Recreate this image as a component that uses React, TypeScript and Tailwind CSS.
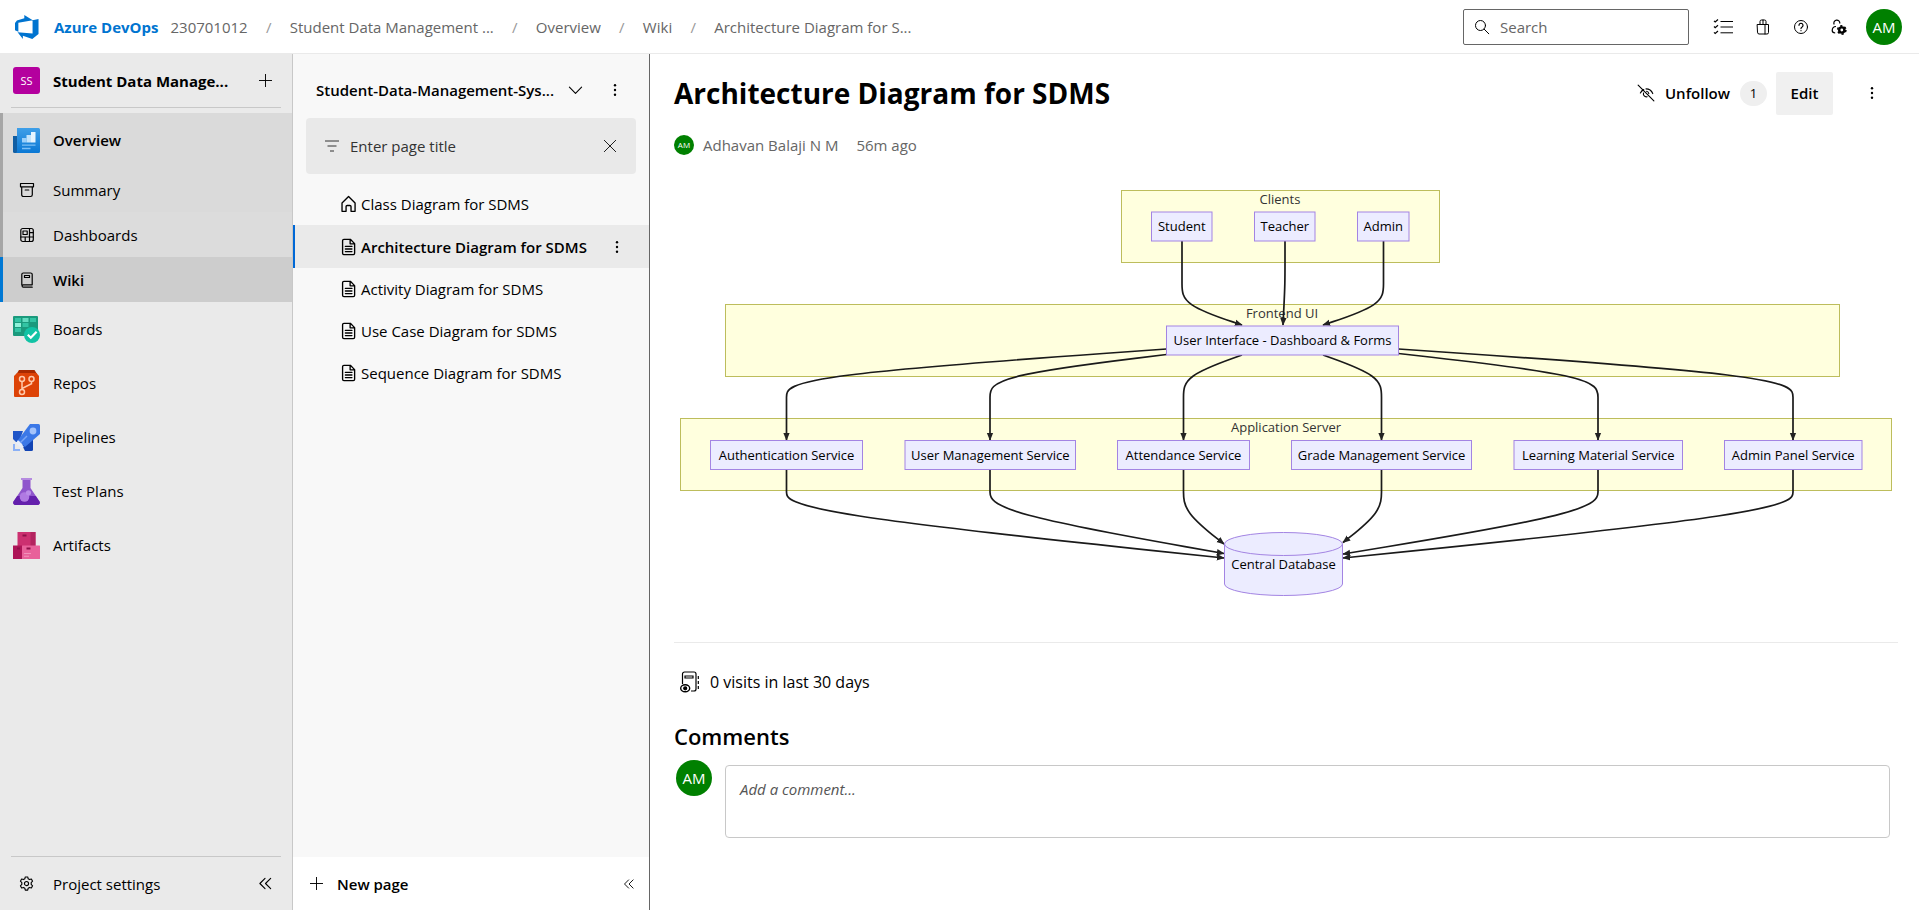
import type { ReactNode } from "react";

type Point = [number, number];

/* ---------- small line icons ---------- */

function Line({ children, className = "size-4", width = 1 }: { children: ReactNode; className?: string; width?: number }) {
  return (
    <svg viewBox="0 0 16 16" className={`shrink-0 ${className}`} fill="none" stroke="currentColor" strokeWidth={width} strokeLinecap="round" strokeLinejoin="round" aria-hidden="true">
      {children}
    </svg>
  );
}

const Plus = ({ className }: { className?: string }) => (
  <Line className={className}>
    <path d="M8 1.5v13M1.5 8h13" />
  </Line>
);

const Dots = () => (
  <svg viewBox="0 0 4 16" className="h-4 w-1 shrink-0" fill="currentColor" aria-hidden="true">
    <circle cx="2" cy="3.2" r="1.2" />
    <circle cx="2" cy="8" r="1.2" />
    <circle cx="2" cy="12.8" r="1.2" />
  </svg>
);

const DoubleChevron = ({ className }: { className?: string }) => (
  <Line className={className} width={1.2}>
    <path d="M7.5 2.5 2 8l5.5 5.5M13.5 2.5 8 8l5.5 5.5" />
  </Line>
);

const PageIcon = () => (
  <Line className="size-[18px]" width={1.2}>
    <path d="M3.5 1.2h5.700l3.800 3.800v8.600a1.200 1.200 0 0 1-1.200 1.200H3.500a1.200 1.200 0 0 1-1.200-1.200V2.400a1.200 1.200 0 0 1 1.200-1.200zM9 1.400v3.800h3.800M4.800 7.500h5.800M4.800 9.800h5.800M4.800 12.100h5.800" />
  </Line>
);

const HomeIcon = () => (
  <Line className="size-[18px]" width={1.2}>
    <path d="M1.800 7.200 7.600 1.400l5.800 5.800v7.300h-3.600v-4.200a1 1 0 0 0-1-1H6.400a1 1 0 0 0-1 1v4.200H1.800z" />
  </Line>
);

/* ---------- coloured service icons ---------- */

const OverviewIcon = () => (
  <svg viewBox="0 0 27 27" className="size-[27px]" aria-hidden="true">
    <defs>
      <linearGradient id="ov" x1="0" y1="0" x2="0" y2="1">
        <stop offset="0" stopColor="#3f9fe8" />
        <stop offset="1" stopColor="#0a78d4" />
      </linearGradient>
    </defs>
    <path d="M0 9h6v17H1.500A1.500 1.500 0 0 1 0 24.500z" fill="#115ea3" />
    <path d="M4 1h21.500A1.500 1.500 0 0 1 27 2.500v22a1.500 1.500 0 0 1-1.500 1.500H2.500A1.700 1.700 0 0 0 4 24.300z" fill="url(#ov)" />
    <path d="M9 11h4.500v4.500H9z" fill="#9bd0fa" />
    <path d="M13.500 8h4.500v7.500h-4.500z" fill="#c3e4fc" />
    <path d="M18 5h4.500v10.500H18z" fill="#e6f5ff" />
    <path d="M9 18.200h13.500M9 21.500h8.500" stroke="#7cc0f6" strokeWidth="1.300" />
  </svg>
);

const BoardsIcon = () => (
  <svg viewBox="0 0 27 27" className="size-[27px]" aria-hidden="true">
    <rect width="25" height="20" rx="1" fill="#1b9a7d" />
    <g fill="#33c4a4">
      <rect x="2" y="2" width="6" height="4" />
      <rect x="17" y="2" width="6" height="4" />
      <rect x="9.500" y="7" width="6" height="4" />
      <rect x="2" y="12" width="6" height="4" />
    </g>
    <rect x="9.500" y="2" width="6" height="4" fill="#63dcc0" />
    <rect x="2" y="7" width="6" height="4" fill="#8ff2da" />
    <circle cx="19" cy="19" r="8" fill="#12c3a5" />
    <path d="m14.800 18.800 3 3 5.800-6" fill="none" stroke="#fff" strokeWidth="2.200" />
  </svg>
);

const ReposIcon = () => (
  <svg viewBox="0 0 27 27" className="size-[27px]" aria-hidden="true">
    <path d="M6 0h15.500l2.500 4H3.500z" fill="#a82a00" />
    <path d="M4 3h19.500L26 6v20a1 1 0 0 1-1 1H2a1 1 0 0 1-1-1V6z" fill="#dd4307" />
    <g fill="none" stroke="#ffc9ab" strokeWidth="1.500">
      <circle cx="9" cy="9" r="2.500" />
      <circle cx="18.500" cy="9" r="2.500" />
      <circle cx="9" cy="22" r="2.500" />
      <path d="M9 11.500v8M18.500 11.500v2.200L9 18.500" />
    </g>
  </svg>
);

const PipelinesIcon = () => (
  <svg viewBox="0 0 27 27" className="size-[27px]" aria-hidden="true">
    <path d="M0 7h10L6 18H3L0 15z" fill="#1f55c8" />
    <path d="M9 21l11-9v13.500a1.500 1.500 0 0 1-1.500 1.500H12z" fill="#1244b4" />
    <path d="M17 0h8.500A1.500 1.500 0 0 1 27 1.500V10L12 23l-7-7z" fill="#3b78e7" />
    <circle cx="20" cy="7" r="3.400" fill="#a4c3fb" />
    <path d="M14 12 7 19" stroke="#7aa5f5" strokeWidth="1.500" />
    <path d="M5 16l6 7-3 1-5-5z" fill="#e6eefc" />
    <path d="M0 20h2v5h5v2H0z" fill="#8ab0f6" />
  </svg>
);

const TestPlansIcon = () => (
  <svg viewBox="0 0 27 27" className="size-[27px]" aria-hidden="true">
    <path d="M9.500 1h8v9l9 13.500A2.300 2.300 0 0 1 24.600 27H2.400A2.300 2.300 0 0 1 .5 23.500L9.500 10z" fill="#8f55cc" />
    <path d="M4.200 18h18.600l3.700 5.500A2.300 2.300 0 0 1 24.600 27H2.400A2.300 2.300 0 0 1 .5 23.500z" fill="#6420ac" />
    <rect x="8" width="11" height="2" fill="#b58be0" />
    <circle cx="11.500" cy="19" r="4.800" fill="#b07ae2" />
    <circle cx="15.500" cy="14.800" r="2.600" fill="#b98ce8" />
  </svg>
);

const ArtifactsIcon = () => (
  <svg viewBox="0 0 27 27" className="size-[27px]" aria-hidden="true">
    <rect x="4.500" width="18" height="14" fill="#cc3070" />
    <path d="M17.500 0h5v14h-5z" fill="#b3245f" />
    <rect y="13.500" width="9" height="13.500" fill="#ad1457" />
    <rect x="9" y="13.500" width="18" height="13.500" rx=".5" fill="#e8619a" />
    <path d="M9.500 3.500h4M4 16.500h3M13.500 16.500h4" stroke="#8e1048" strokeWidth="1.800" />
    <path d="M11 21.500h7M11 24.300h5" stroke="#f291bb" strokeWidth="1.100" />
  </svg>
);

/* ---------- header ---------- */

const crumbs = ["Student Data Management ...", "Overview", "Wiki", "Architecture Diagram for S..."];

function Avatar({ className }: { className: string }) {
  return <span className={`flex shrink-0 items-center justify-center rounded-full bg-[#008000] text-white ${className}`}>AM</span>;
}

function Header() {
  return (
    <header className="flex h-[54px] shrink-0 items-center border-b border-[#eaeaea] bg-white">
      <svg viewBox="0 0 25 25" className="ml-[15px] size-6 shrink-0" fill="#0074d0" aria-hidden="true">
        <path d="M24.500 4.200v15.600L18 25 8.200 21.500V25L2.700 18l15.600 1.200V5.500zM18.500 5.500 9.700 0v3.500L2 5.700 0 8.400v7.500l3.500 1.500V8z" />
      </svg>
      <a href="#" className="ml-[15px] font-bold text-[#0074d0]">Azure DevOps</a>
      <nav aria-label="Breadcrumb" className="flex items-center text-[#666]">
        <a href="#" className="ml-3">230701012</a>
        {crumbs.map((crumb) => (
          <span key={crumb} className="flex items-center">
            <span className="mx-[17px] w-2 text-center text-[#999]">/</span>
            <a href="#">{crumb}</a>
          </span>
        ))}
      </nav>
      <label className="ml-auto flex h-9 w-[226px] items-center gap-2.5 rounded-[2px] border border-[#666] pl-2.5">
        <Line>
          <circle cx="6.500" cy="6.500" r="5" />
          <path d="m10.200 10.200 4.600 4.600" />
        </Line>
        <input type="search" placeholder="Search" aria-label="Search" className="w-full min-w-0 bg-transparent outline-none placeholder:text-[#666]" />
      </label>
      <div className="ml-6 mr-[17px] flex items-center">
        <button type="button" aria-label="Work items" className="flex">
          <svg viewBox="0 0 20 16" className="h-4 w-5" fill="none" stroke="currentColor" strokeWidth="1" aria-hidden="true">
            <path d="M7.500 2.500H20M7.500 8H20M7.500 13.800H20" />
            <path d="m1 1.800 1.200 1.200L5 .5M1 7.500l1.200 1.200L5 6.200M1 13.300l1.200 1.200L5 12" strokeWidth="1.200" />
          </svg>
        </button>
        <button type="button" aria-label="Marketplace" className="ml-[22px] flex">
          <Line className="size-4">
            <path d="M2.500 5.500h11v8a1.500 1.500 0 0 1-1.500 1.500H4a1.500 1.500 0 0 1-1.500-1.500zM10 5.500V15M5 5.500V2.500a1.500 1.500 0 0 1 1.500-1.500h3a1.500 1.500 0 0 1 1.500 1.500v3M8 1v4.500" />
          </Line>
        </button>
        <button type="button" aria-label="Help" className="ml-[22px] flex">
          <Line className="size-4">
            <circle cx="8" cy="8" r="6.500" />
            <path d="M6 6.300a2 2 0 1 1 3.100 1.700C8.300 8.500 8 8.800 8 9.600M8 11.600v.1" strokeWidth="1.200" />
          </Line>
        </button>
        <button type="button" aria-label="User settings" className="ml-[22px] flex">
          <svg viewBox="0 0 16 16" className="size-4" fill="none" stroke="currentColor" aria-hidden="true">
            <path d="M3.200 5.500A3 3 0 1 1 8.800 4.500M5 7.500a4 4 0 0 0-3.800 4c0 1.500 1.200 2.300 3 2.500" strokeWidth="1.200" />
            <circle cx="10.800" cy="11" r="2.600" strokeWidth="2.400" />
            <circle cx="10.800" cy="11" r="4.100" strokeWidth="1.600" strokeDasharray="2.200 2.100" />
          </svg>
        </button>
        <Avatar className="ml-[19px] size-9 text-[15px]" />
      </div>
    </header>
  );
}

/* ---------- project sidebar ---------- */

const services = [
  { label: "Boards", icon: <BoardsIcon /> },
  { label: "Repos", icon: <ReposIcon /> },
  { label: "Pipelines", icon: <PipelinesIcon /> },
  { label: "Test Plans", icon: <TestPlansIcon /> },
  { label: "Artifacts", icon: <ArtifactsIcon /> },
];

function NavRow({ icon, label, className }: { icon: ReactNode; label: string; className: string }) {
  return (
    <a href="#" className={`flex items-center border-l-[3px] pl-2.5 ${className}`}>
      <span className="flex w-[27px] justify-center">{icon}</span>
      <span className="ml-[13px]">{label}</span>
    </a>
  );
}

function Sidebar() {
  return (
    <aside className="flex w-[293px] shrink-0 flex-col border-r border-[#c8c8c8] bg-[#eaeaea]">
      <div className="mx-[11px] flex h-[54px] items-center border-b border-[#c8c8c8] pl-0.5">
        <span className="flex size-[27px] items-center justify-center rounded-[3px] bg-[#b4009e] text-[11px] text-white">SS</span>
        <span className="ml-[13px] font-bold">Student Data Manage...</span>
        <button type="button" aria-label="Create new" className="ml-auto mr-2">
          <Plus className="size-[15px]" />
        </button>
      </div>
      <nav aria-label="Project" className="mt-[5px] flex flex-col">
        <NavRow label="Overview" icon={<OverviewIcon />} className="h-[54px] border-[#a6a6a6] bg-[#dadada] font-semibold" />
        <NavRow
          label="Summary"
          className="h-[45px] border-[#a6a6a6] bg-[#dadada]"
          icon={
            <Line className="size-4" width={1.2}>
              <path d="M1.500 1.500h13v3.300h-13zM2.700 5v7.800a1.700 1.700 0 0 0 1.700 1.700h7.200a1.700 1.700 0 0 0 1.700-1.700V5M6.200 8h3.600" />
            </Line>
          }
        />
        <NavRow
          label="Dashboards"
          className="h-[45px] border-[#a6a6a6] bg-[#dcdcdc]"
          icon={
            <Line className="size-4" width={1.2}>
              <rect x="1.800" y="1.500" width="12.500" height="13" rx="2" />
              <path d="M10.500 1.500v13M6.200 10v4.500M1.800 10h12.500M10.500 5.700h3.800M4 4h4.200v3.500H4z" />
            </Line>
          }
        />
        <NavRow
          label="Wiki"
          className="h-[45px] border-[#0078d4] bg-[#cdcdcd] font-semibold"
          icon={
            <Line className="size-4" width={1.2}>
              <path d="M2.800 13V2.500a1.500 1.500 0 0 1 1.500-1.500h7.400a1.500 1.500 0 0 1 1.500 1.500v10.300H4.300a1.200 1.200 0 0 0 0 2.400h8.900M5.500 3.500h5v2h-5z" />
            </Line>
          }
        />
        {services.map((s) => (
          <NavRow key={s.label} label={s.label} icon={s.icon} className="h-[54px] border-transparent" />
        ))}
      </nav>
      <div className="mx-[11px] mt-auto flex h-[54px] items-center border-t border-[#c8c8c8] pl-0.5">
        <a href="#" className="flex items-center">
          <span className="flex w-[27px] justify-center">
            <Line className="size-[15px]" width={1.2}>
              <path d="M6.700 1h2.600l.5 2 1.400.8 2-.6 1.300 2.300L13 7v2l1.500 1.500-1.300 2.300-2-.6-1.400.8-.5 2H6.700l-.5-2-1.400-.8-2 .6-1.300-2.300L3 9V7L1.500 5.500l1.300-2.300 2 .6L6.200 3z" />
              <circle cx="8" cy="8" r="2.200" />
            </Line>
          </span>
          <span className="ml-[13px]">Project settings</span>
        </a>
        <button type="button" aria-label="Collapse navigation" className="ml-auto mr-2">
          <DoubleChevron className="size-[15px]" />
        </button>
      </div>
    </aside>
  );
}

/* ---------- wiki page tree ---------- */

const pages = ["Class Diagram for SDMS", "Architecture Diagram for SDMS", "Activity Diagram for SDMS", "Use Case Diagram for SDMS", "Sequence Diagram for SDMS"];

function PageTree() {
  return (
    <section aria-label="Wiki pages" className="flex w-[357px] shrink-0 flex-col border-r border-[#666] bg-[#f8f8f8]">
      <div className="flex h-16 shrink-0 items-center pl-[23px] pr-8 pt-2">
        <button type="button" className="flex items-center gap-3.5 font-semibold">
          Student-Data-Management-Sys...
          <Line className="size-[15px]" width={1.2}>
            <path d="m1.500 4.500 6.500 6.500 6.500-6.500" />
          </Line>
        </button>
        <button type="button" aria-label="Wiki actions" className="ml-auto">
          <Dots />
        </button>
      </div>
      <div className="ml-[13px] mr-[13px] flex h-14 shrink-0 items-center rounded-[4px] bg-[#e9e9e9] pl-[19px] pr-[19px]">
        <svg viewBox="0 0 14 12" className="h-3 w-3.5 shrink-0" stroke="#333" aria-hidden="true">
          <path d="M0 1h14M2.500 6h9M5 11h4" />
        </svg>
        <input type="text" placeholder="Enter page title" aria-label="Enter page title" className="ml-[11px] w-full min-w-0 bg-transparent outline-none placeholder:text-[#333]" />
        <button type="button" aria-label="Clear filter">
          <Line className="size-3.5">
            <path d="m1.500 1.500 13 13M14.500 1.500l-13 13" />
          </Line>
        </button>
      </div>
      <ul className="mt-[9px]">
        {pages.map((page, i) => {
          const active = i === 1;
          return (
            <li key={page} className={active ? "flex h-[43px] items-center border-l-2 border-[#0068d6] bg-[#eaeaea] font-semibold" : "flex h-[42px] items-center border-l-2 border-transparent"}>
              <a href="#" className="ml-[45px] flex items-center gap-[3px]">
                {i === 0 ? <HomeIcon /> : <PageIcon />}
                {page}
              </a>
              {active && (
                <button type="button" aria-label="Page actions" className="ml-auto mr-[30px]">
                  <Dots />
                </button>
              )}
            </li>
          );
        })}
      </ul>
      <div className="mt-auto flex h-[53px] items-center bg-white pl-4 pr-3.5">
        <button type="button" className="flex items-center gap-[13px] font-semibold">
          <Plus className="size-[15px]" />
          New page
        </button>
        <button type="button" aria-label="Collapse page tree" className="ml-auto">
          <DoubleChevron className="size-3" />
        </button>
      </div>
    </section>
  );
}

/* ---------- architecture diagram ---------- */

const clusters = [
  { label: "Clients", x: 1121, y: 190, w: 318, tx: 1280 },
  { label: "Frontend UI", x: 725, y: 304, w: 1114, tx: 1282 },
  { label: "Application Server", x: 680, y: 418, w: 1211, tx: 1286 },
];

const nodes = [
  { label: "Student", x: 1151.5, y: 212, w: 60.5 },
  { label: "Teacher", x: 1254.5, y: 212, w: 60.5 },
  { label: "Admin", x: 1357.5, y: 212, w: 51.5 },
  { label: "User Interface - Dashboard & Forms", x: 1166.5, y: 326, w: 232 },
  { label: "Authentication Service", x: 710.5, y: 440.5, w: 152 },
  { label: "User Management Service", x: 905, y: 440.5, w: 170.5 },
  { label: "Attendance Service", x: 1117.5, y: 440.5, w: 132 },
  { label: "Grade Management Service", x: 1291.5, y: 440.5, w: 180 },
  { label: "Learning Material Service", x: 1514, y: 440.5, w: 168.5 },
  { label: "Admin Panel Service", x: 1724.5, y: 440.5, w: 137.5 },
];

const clientEdges: Point[][] = [
  [[1182, 241], [1182, 262], [1182, 284], [1182, 305], [1242, 325]],
  [[1285, 241], [1285, 262], [1285, 284], [1284, 305], [1283, 325]],
  [[1383.5, 241], [1383.5, 262], [1383.5, 284], [1383.5, 305], [1323, 325]],
];

/* centre of each service, where its edge leaves the interface box, where it meets the database */
const serviceLinks: { x: number; from: Point; to: Point }[] = [
  { x: 786.5, from: [1166.5, 349], to: [1224, 558] },
  { x: 990, from: [1166.5, 354.5], to: [1224, 553.5] },
  { x: 1183.5, from: [1242, 355], to: [1224, 544] },
  { x: 1381.5, from: [1323, 355], to: [1343, 542.5] },
  { x: 1598, from: [1398.5, 353.5], to: [1343, 554] },
  { x: 1793, from: [1398.5, 349], to: [1343, 558] },
];

const edges: Point[][] = [
  ...clientEdges,
  ...serviceLinks.map(({ x, from }): Point[] => [from, [x, 376], [x, 397], [x, 419], [x, 440]]),
  ...serviceLinks.map(({ x, to }): Point[] => [[x, 469], [x, 480], [x, 490], [x, 512], to]),
];

/* uniform B-spline through the control points, clamped at both ends */
function basisPath(p: Point[]) {
  const at = (a: Point, b: Point, k: number, m: number) => `${(k * a[0] + m * b[0]) / (k + m)} ${(k * a[1] + m * b[1]) / (k + m)}`;
  const knot = (a: Point, b: Point, c: Point) => `${(a[0] + 4 * b[0] + c[0]) / 6} ${(a[1] + 4 * b[1] + c[1]) / 6}`;
  const last = p.length - 1;
  let d = `M${p[0].join(" ")}L${at(p[0], p[1], 5, 1)}`;
  for (let i = 1; i <= last; i++) {
    const next = p[Math.min(i + 1, last)];
    d += `C${at(p[i - 1], p[i], 2, 1)} ${at(p[i - 1], p[i], 1, 2)} ${knot(p[i - 1], p[i], next)}`;
  }
  return `${d}L${p[last].join(" ")}`;
}

function Diagram() {
  return (
    <svg viewBox="674 178 1224 464" className="w-full" role="img" aria-label="Architecture diagram" fontSize="13">
      <defs>
        <marker id="arrow" viewBox="0 0 10 10" refX="9" refY="5" markerWidth="8" markerHeight="8" markerUnits="userSpaceOnUse" orient="auto">
          <path d="M0 1 10 5 0 9z" fill="#222" />
        </marker>
      </defs>
      {clusters.map((c) => (
        <rect key={c.label} x={c.x + 0.5} y={c.y + 0.5} width={c.w} height="72" fill="#ffffde" stroke="#bdbd5c" />
      ))}
      <g fill="#333" textAnchor="middle">
        {clusters.map((c) => (
          <text key={c.label} x={c.tx} y={c.y + 14}>{c.label}</text>
        ))}
      </g>
      <g fill="none" stroke="#1a1a1a" strokeWidth="1.7">
        {edges.map((p, i) => (
          <path key={i} d={basisPath(p)} markerEnd="url(#arrow)" />
        ))}
      </g>
      {nodes.map((n) => (
        <g key={n.label}>
          <rect x={n.x} y={n.y} width={n.w} height="29" fill="#ececff" stroke="#a384e3" />
          <text x={n.x + n.w / 2} y={n.y + 19} textAnchor="middle">{n.label}</text>
        </g>
      ))}
      <path d="M1224.500 544a59 11.500 0 0 1 118 0v40a59 11.500 0 0 1-118 0z" fill="#ececff" stroke="#a384e3" />
      <path d="M1224.500 544a59 11.500 0 0 0 118 0" fill="none" stroke="#a384e3" />
      <text x="1283.500" y="569" textAnchor="middle">Central Database</text>
    </svg>
  );
}

/* ---------- page ---------- */

function WikiPage() {
  return (
    <main className="flex min-w-0 flex-1 flex-col bg-white pl-6 pr-[21px]">
      <div className="mt-[17px] flex h-11 items-center">
        <h1 className="text-[28px] leading-10 font-bold">Architecture Diagram for SDMS</h1>
        <button type="button" className="ml-auto flex items-center font-semibold">
          <Line className="size-[18px]">
            <path d="m1 1 14 14M3 8c.8-1.500 1.800-2.500 3-3M8 4.300c2.500 0 5 1.700 6 4.200M5.800 8A2.600 2.600 0 0 0 9 11.300M8.500 6.500a2.500 2.500 0 0 1 2 2" />
          </Line>
          <span className="ml-2.5">Unfollow</span>
        </button>
        <span className="ml-2.5 flex h-[25px] w-[27px] items-center justify-center rounded-full bg-[#efefef] text-[13px]">1</span>
        <button type="button" className="ml-[9px] h-[43px] w-[57px] rounded-[2px] bg-[#f0f0f0] font-semibold">Edit</button>
        <button type="button" aria-label="More actions" className="ml-[37px] mr-6">
          <Dots />
        </button>
      </div>
      <div className="mt-4 flex h-7 items-center text-[#666]">
        <Avatar className="size-5 text-[8px]" />
        <span className="ml-[9px]">Adhavan Balaji N M</span>
        <span className="ml-[18px]">56m ago</span>
      </div>
      <div className="mt-[19px] flex border-b border-[#eaeaea]">
        <Diagram />
      </div>
      <div className="mt-[25px] flex h-7 items-center pl-1.5 text-base">
        <svg viewBox="0 0 20 22" className="h-[22px] w-5" fill="none" stroke="currentColor" strokeWidth="1.200" aria-hidden="true">
          <path d="M2.500 13V3A2 2 0 0 1 4.500 1h9.500a2 2 0 0 1 2 2v15a2 2 0 0 1-2 2h-3M5 5h8v2H5zM18.300 5v3M18.300 10v3M18.300 15v3" />
          <ellipse cx="5.200" cy="17.300" rx="4.500" ry="3.500" strokeWidth="1.400" />
          <circle cx="5.200" cy="17.300" r="1.500" fill="currentColor" />
        </svg>
        <span className="ml-2.5">0 visits in last 30 days</span>
      </div>
      <h2 className="mt-6 text-[22px] leading-8 font-semibold">Comments</h2>
      <div className="mt-2 flex pl-0.5">
        <Avatar className="size-9 text-[15px]" />
        <textarea placeholder="Add a comment..." aria-label="Add a comment" className="mt-[5px] ml-[13px] mr-2 h-[73px] flex-1 resize-none rounded-[4px] border border-[#c8c8c8] px-3.5 py-3 leading-[22px] outline-none placeholder:text-[#555] placeholder:italic" />
      </div>
    </main>
  );
}

export default function App() {
  return (
    <div className="flex min-h-screen flex-col bg-white font-['Open_Sans','Noto_Sans',sans-serif] text-[15px] leading-5 text-black">
      <Header />
      <div className="flex flex-1">
        <Sidebar />
        <PageTree />
        <WikiPage />
      </div>
    </div>
  );
}
